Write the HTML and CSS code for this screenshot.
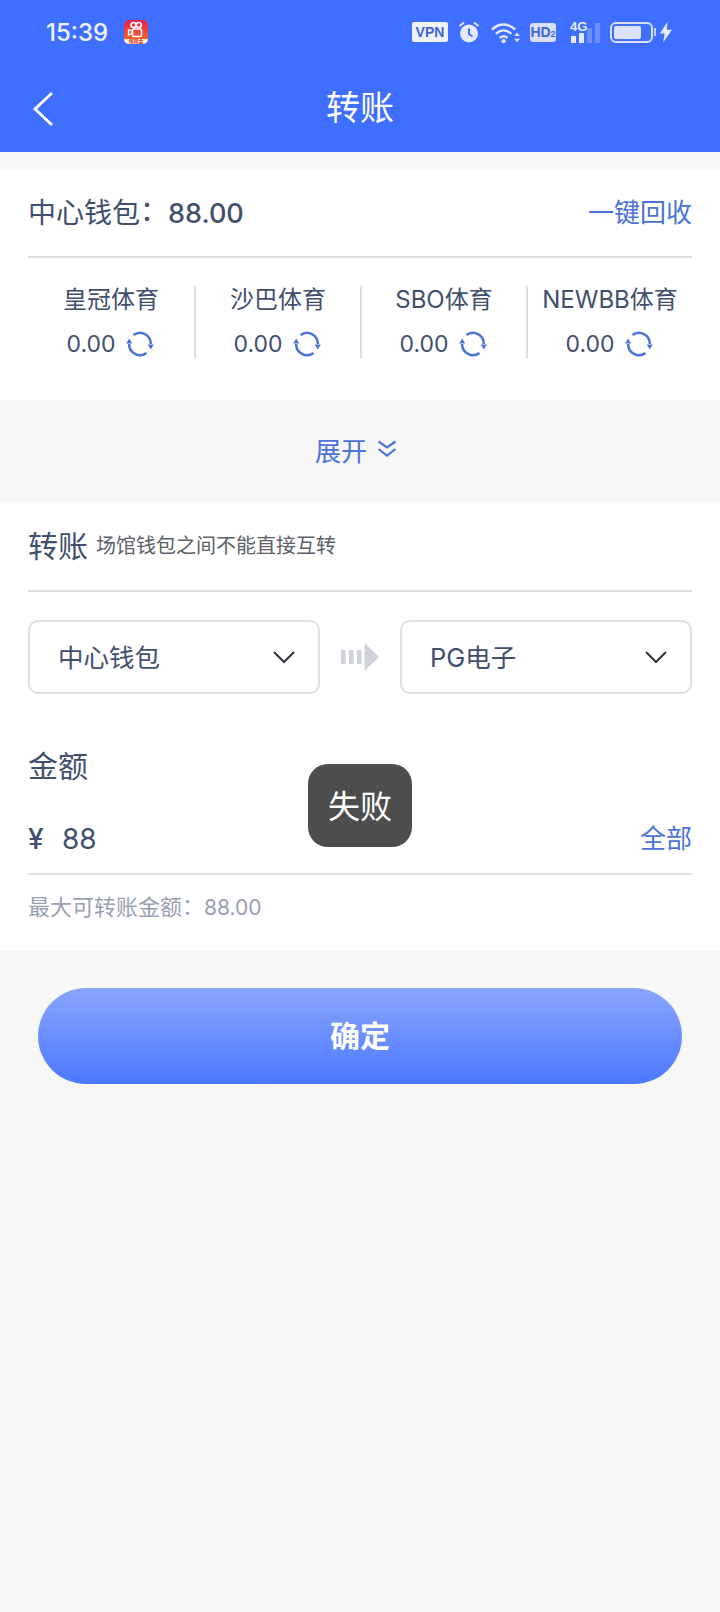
FILE: index.html
```html
<!DOCTYPE html>
<html lang="zh">
<head>
<meta charset="utf-8">
<title>转账</title>
<link rel="stylesheet" href="styles.css">
</head>
<body>
<div class="page">
  <header class="header">
    <div class="status">
      <div class="status-left">
        <span class="time">15:39</span>
        <svg class="app-icon" viewBox="0 0 24 24">
          <defs><linearGradient id="ks" x1="0" y1="0" x2="0" y2="1"><stop offset="0" stop-color="#e81f58"/><stop offset="1" stop-color="#f4751c"/></linearGradient></defs>
          <rect width="24" height="24" rx="5" fill="url(#ks)"/>
          <path d="M0 19h24a5 5 0 0 1-5 5H5a5 5 0 0 1-5-5z" fill="#fdf1dc"/>
          <circle cx="9.500" cy="5" r="2.500" fill="none" stroke="#fff" stroke-width="1.500"/>
          <circle cx="14.800" cy="5" r="2.500" fill="none" stroke="#fff" stroke-width="1.500"/>
          <rect x="8.500" y="9" width="9" height="7.500" rx="1.500" fill="none" stroke="#fff" stroke-width="1.600"/>
          <path d="M8 11L4.500 9.500v5.500L8 13.500z" fill="none" stroke="#fff" stroke-width="1.300"/>
          <text class="app-label" x="12" y="23">领现金</text>
        </svg>
      </div>
      <div class="status-right">
        <span class="vpn">VPN</span>
        <svg class="i-alarm" viewBox="0 0 22 22">
          <circle cx="11" cy="12.500" r="9" fill="#e4e9ff"/>
          <path d="M1.500 5L6 1.500M20.500 5L16 1.500" stroke="#e4e9ff" stroke-width="2" fill="none"/>
          <path d="M11 7.500v5.500l3.500 2.500" stroke="#3f6fff" stroke-width="2" fill="none"/>
        </svg>
        <svg class="i-wifi" viewBox="0 0 30 23">
          <path d="M1 8.500C8 1.500 18 1.500 25 8.500M5 13c5-4.800 11-4.800 16 0M9 17c3-2.500 5-2.500 8 0" fill="none" stroke="#e4e9ff" stroke-width="2.400"/>
          <circle cx="13" cy="20.500" r="2.200" fill="#e4e9ff"/>
          <path d="M24 15h6l-3-3.500zM24 18h6l-3 3.500z" fill="#e4e9ff"/>
        </svg>
        <span class="hd">HD<small>2</small></span>
        <span class="net">
          <span class="net-label">4G</span>
          <span class="bars"><i class="bar-a"></i><i class="bar-b"></i></span>
          <i class="bar-c"></i><i class="bar-d"></i>
        </span>
        <span class="battery"><span class="battery-fill"></span></span>
        <span class="battery-cap"></span>
        <svg class="i-bolt" viewBox="0 0 13 22"><path d="M8 0L0 12.500h5L3.500 22 13 8.500H7.500z" fill="#e4e9ff"/></svg>
      </div>
    </div>
    <nav class="nav">
      <svg class="back" viewBox="0 0 22 36"><path d="M20 2L3 18l17 16" fill="none" stroke="#fff" stroke-width="2.800"/></svg>
      <h1 class="title">转账</h1>
    </nav>
  </header>

  <section class="card wallet">
    <div class="wallet-head">
      <div class="wallet-main">中心钱包<span class="colon">：</span><b>88.00</b></div>
      <a class="link">一键回收</a>
    </div>
    <div class="venues">
      <div class="venue">
        <div class="venue-name">皇冠体育</div>
        <div class="venue-val">0.00<svg class="refresh" viewBox="0 0 28 26"><use href="#r"/></svg></div>
      </div>
      <div class="venue">
        <div class="venue-name">沙巴体育</div>
        <div class="venue-val">0.00<svg class="refresh" viewBox="0 0 28 26"><use href="#r"/></svg></div>
      </div>
      <div class="venue">
        <div class="venue-name">SBO体育</div>
        <div class="venue-val">0.00<svg class="refresh" viewBox="0 0 28 26"><use href="#r"/></svg></div>
      </div>
      <div class="venue">
        <div class="venue-name">NEWBB体育</div>
        <div class="venue-val">0.00<svg class="refresh" viewBox="0 0 28 26"><use href="#r"/></svg></div>
      </div>
    </div>
  </section>

  <div class="expand">
    <span class="expand-text">展开</span>
    <svg class="dbl" viewBox="0 0 20 17"><path d="M1.500 1.500l8.500 6 8.500-6M1.500 9l8.500 6.500L18.500 9" fill="none" stroke="#4a72d8" stroke-width="2.200"/></svg>
  </div>

  <section class="card transfer">
    <div class="transfer-head">
      <span class="transfer-title">转账</span>
      <span class="transfer-note">场馆钱包之间不能直接互转</span>
    </div>
    <div class="selects">
      <div class="select">
        <span class="select-text">中心钱包</span>
        <svg class="caret" viewBox="0 0 24 14"><path d="M2 2l10 10L22 2" fill="none" stroke="#2f3442" stroke-width="2"/></svg>
      </div>
      <svg class="flow" viewBox="0 0 38 28">
        <path d="M0 7h4.500v14H0zM8 7h4.500v14H8zM16 7h4.500v14H16zM23.500 0L38 14 23.500 28z" fill="#cfd1dc"/>
      </svg>
      <div class="select">
        <span class="select-text">PG电子</span>
        <svg class="caret" viewBox="0 0 24 14"><path d="M2 2l10 10L22 2" fill="none" stroke="#2f3442" stroke-width="2"/></svg>
      </div>
    </div>
    <div class="amount-label">金额</div>
    <div class="amount-row">
      <span class="yen">¥</span>
      <span class="amount">88</span>
      <a class="link all">全部</a>
    </div>
    <div class="hint">最大可转账金额<span class="colon">：</span><span class="hint-num">88.00</span></div>
  </section>

  <button class="confirm">确定</button>

  <div class="toast">失败</div>

  <svg class="defs" width="0" height="0">
    <symbol id="r" viewBox="0 0 28 26">
      <path d="M7.500 4A10.800 10.800 0 0 1 24.800 13M20.500 22A10.800 10.800 0 0 1 3.200 13" fill="none" stroke="#4a72d8" stroke-width="2.500"/>
      <path d="M21.800 13.500h6L24.800 18.500zM0.200 12.500h6L3.200 7.500z" fill="#4a72d8"/>
    </symbol>
  </svg>
</div>
</body>
</html>
```
FILE: styles.css
```css
* { box-sizing: border-box; margin: 0; padding: 0; }
html, body { height: 100%; }
body {
  background: #f7f7f7;
  font-family: Inter, "Noto Sans CJK SC", sans-serif;
  color: #414f6d;
}
.page { position: relative; width: 720px; height: 1612px; overflow: hidden; }

.header { height: 152px; background: #3f6fff; color: #fff; }
.status { height: 60px; padding: 18px 48px 0 46px; display: flex; justify-content: space-between; align-items: flex-start; }
.status-left { display: flex; align-items: center; height: 28px; }
.time { font-size: 24px; line-height: 28px; font-weight: 500; color: #eef1ff; width: 78px; margin-top: 2px; font-family: Inter, sans-serif; }
.app-icon { width: 24px; height: 24px; }
.app-label { font: 700 5px "Noto Sans CJK SC", sans-serif; fill: #d9342b; text-anchor: middle; }
.status-right { display: flex; align-items: center; height: 28px; }
.vpn {
  width: 36px; height: 20px; background: #eef1ff; color: #3f66c8; border-radius: 2px;
  font: 700 14px/20px "Liberation Sans", sans-serif; text-align: center;
}
.i-alarm { width: 22px; height: 22px; margin-left: 10px; }
.i-wifi { width: 29px; height: 23px; margin-left: 11px; }
.hd {
  width: 26px; height: 19px; margin-left: 10px; background: #d9e0ff; color: #3f66c8; border-radius: 3px;
  font: 700 14px/19px "Liberation Sans", sans-serif; text-align: center;
}
.hd small { font-size: 9px; }
.net { position: relative; width: 30px; height: 23px; margin-left: 14px; display: block; }
.net-label { position: absolute; left: 0; top: -1px; font: 700 13px/13px "Liberation Sans", sans-serif; color: #e4e9ff; }
.bars { position: absolute; left: 1px; bottom: 1px; display: flex; gap: 3px; align-items: flex-end; }
.bars i { display: block; width: 5px; background: #e4e9ff; }
.bar-a { height: 7px; }
.bar-b { height: 10px; }
.bar-c, .bar-d { position: absolute; bottom: 1px; width: 5px; background: #6d8fff; display: block; }
.bar-c { left: 17px; height: 15px; }
.bar-d { left: 25px; height: 20px; }
.battery {
  width: 43px; height: 21px; margin-left: 10px; border: 2px solid #d9e0ff; border-radius: 6px; padding: 2px; display: block;
}
.battery-fill { display: block; width: 27px; height: 13px; background: #dde3ff; border-radius: 2px; }
.battery-cap { width: 2px; height: 8px; margin-left: 1px; background: #c4d0ff; display: block; }
.i-bolt { width: 12px; height: 22px; margin-left: 4px; }

.nav { position: relative; height: 92px; display: flex; align-items: center; justify-content: center; }
.back { position: absolute; left: 32px; top: 31px; width: 22px; height: 36px; }
.title { font-size: 34px; font-weight: 400; line-height: 92px; padding-top: 3px; }

.card { background: #fff; }
.wallet { margin-top: 18px; height: 230px; padding: 0 28px; }
.wallet-head {
  height: 88px; border-bottom: 2px solid #e0e0e0; display: flex; justify-content: space-between; align-items: center;
  padding-bottom: 1px;
}
.wallet-main { font-size: 28px; line-height: 40px; }
.wallet-main b { font-weight: 500; font-size: 27px; }
.colon { vertical-align: 0.06em; }
.link { color: #4a72d8; font-size: 26px; line-height: 36px; }
.venues { margin-top: 28px; display: grid; grid-template-columns: 168px 166px 166px 1fr; }
.venue { height: 73px; border-right: 2px solid #dedede; text-align: center; }
.venue:last-child { border-right: 0; }
.venue-name { font-size: 24px; line-height: 28px; margin-bottom: 15px; white-space: nowrap; }
.venue-val { font-size: 23px; line-height: 30px; display: flex; justify-content: center; align-items: center; gap: 10px; padding-right: 2px; }
.refresh { width: 28px; height: 26px; }

.expand { height: 102px; display: flex; align-items: center; justify-content: center; gap: 10px; color: #4a72d8; font-size: 26px; padding-right: 8px; }
.expand-text { padding-bottom: 4px; }
.dbl { width: 20px; height: 17px; margin-top: -6px; }

.transfer { height: 449px; padding: 0 28px; }
.transfer-head { height: 90px; border-bottom: 2px solid #e0e0e0; display: flex; align-items: center; gap: 8px; }
.transfer-title { font-size: 30px; line-height: 40px; }
.transfer-note { font-size: 20px; line-height: 28px; color: #5d6068; }
.selects { margin-top: 28px; display: flex; justify-content: space-between; align-items: center; }
.select {
  width: 292px; height: 74px; border: 2px solid #e0e0e0; border-radius: 10px; display: flex; align-items: center;
  justify-content: space-between; padding: 0 22px 0 28px; font-size: 25.500px;
}
.select-text { padding-bottom: 4px; }
.caret { width: 24px; height: 14px; }
.flow { width: 38px; height: 28px; }
.amount-label { margin-top: 52px; font-size: 30px; line-height: 40px; }
.amount-row { height: 60px; margin-top: 29px; border-bottom: 2px solid #e0e0e0; display: flex; align-items: center; padding-bottom: 10px; }
.yen { font-size: 28px; font-weight: 500; width: 34px; }
.amount { font-size: 28px; flex: 1; }
.all { font-size: 26px; }
.hint { margin-top: 16px; font-size: 22px; line-height: 30px; color: #9aa0b2; }
.hint-num { font-size: 21px; }

.confirm {
  display: block; width: 644px; height: 96px; margin: 37px 0 0 38px; border: 0; border-radius: 48px;
  background: linear-gradient(#8aa5ff, #4c78ff); color: #fff; font: 700 30px/96px Inter, "Noto Sans CJK SC", sans-serif;
}

.toast {
  position: absolute; left: 308px; top: 764px; width: 104px; height: 83px; border-radius: 20px;
  background: #4d4d4d; color: #fff; font-size: 32px; line-height: 86px; text-align: center;
}
.defs { position: absolute; }
```
